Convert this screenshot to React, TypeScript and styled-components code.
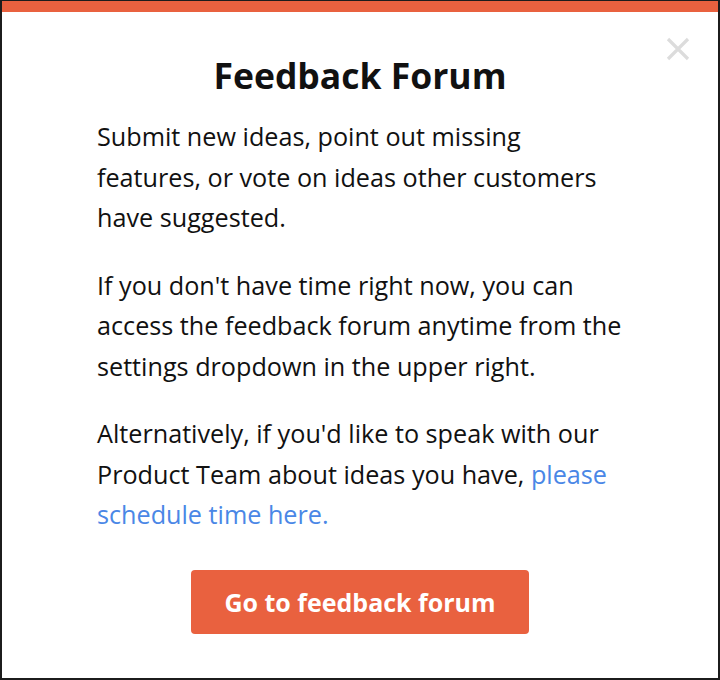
import React, { FC } from 'react';
import styled, { createGlobalStyle } from 'styled-components';

const GlobalStyle = createGlobalStyle`
  html, body {
    margin: 0;
    padding: 0;
    background: #ffffff;
  }
  body {
    font-family: 'Open Sans', 'Liberation Sans', sans-serif;
  }
`;

const ORANGE = '#e9613f';

const App: FC = () => {
  return (
    <>
      <GlobalStyle />
      <Modal>
        <TopBar />
        <CloseButton aria-label="Close">
          <svg width="24" height="24" viewBox="0 0 24 24" aria-hidden>
            <path d="M2 2 L22 22 M22 2 L2 22" stroke="#dcdcdc" strokeWidth="3.2" strokeLinecap="butt" />
          </svg>
        </CloseButton>
        <Body>
          <Title>Feedback Forum</Title>
          <Paragraph>
            Submit new ideas, point out missing features, or vote on ideas other customers have
            suggested.
          </Paragraph>
          <Paragraph>
            If you don't have time right now, you can access the feedback forum anytime from the
            settings dropdown in the upper right.
          </Paragraph>
          <Paragraph>
            Alternatively, if you'd like to speak with our Product Team about ideas you have,{' '}
            <Link href="#">please schedule time here.</Link>
          </Paragraph>
          <PrimaryButton>Go to feedback forum</PrimaryButton>
        </Body>
      </Modal>
    </>
  );
};

export default App;

const Modal = styled.div`
  position: relative;
  box-sizing: border-box;
  width: 720px;
  height: 680px;
  border: 2px solid #1c1c1c;
  border-top-width: 1px;
  background: #ffffff;
  display: flex;
  flex-direction: column;
`;

const TopBar = styled.div`
  height: 11px;
  background-color: ${ORANGE};
  flex-shrink: 0;
`;

const CloseButton = styled.button`
  position: absolute;
  top: 36px;
  right: 28px;
  width: 24px;
  height: 24px;
  padding: 0;
  border: none;
  background: transparent;
  cursor: pointer;
  display: flex;
`;

const Body = styled.div`
  display: flex;
  flex-direction: column;
  align-items: center;
  padding-top: 40px;
`;

const Title = styled.h1`
  margin: 0 0 18px;
  font-size: 35.5px;
  line-height: 46px;
  font-weight: 700;
  color: #111111;
  text-align: center;
`;

const Paragraph = styled.p`
  box-sizing: border-box;
  width: 526px;
  margin: 0 0 27px;
  font-size: 25.2px;
  line-height: 40.5px;
  color: #111111;
`;

const Link = styled.a`
  color: #4a87e6;
  text-decoration: none;
`;

const PrimaryButton = styled.button`
  margin-top: 8px;
  width: 338px;
  height: 64px;
  border: none;
  border-radius: 4px;
  background-color: ${ORANGE};
  color: #ffffff;
  font-family: 'Open Sans', 'Liberation Sans', sans-serif;
  font-size: 25px;
  font-weight: 700;
  cursor: pointer;
`;
